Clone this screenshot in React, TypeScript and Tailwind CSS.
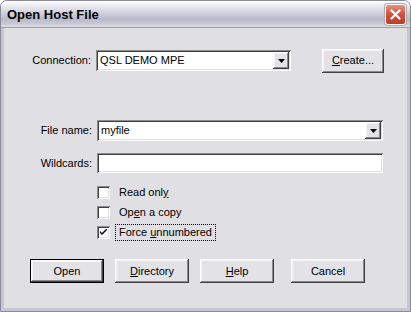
import React from "react";

const raised =
  "bg-[#e3e2e6] shadow-[inset_-1px_-1px_0_#404040,inset_1px_1px_0_#ffffff,inset_-2px_-2px_0_#8a8a8a,inset_2px_2px_0_#f4f4f4]";
const sunken =
  "bg-white shadow-[inset_1px_1px_0_#8c8c8c,inset_-1px_-1px_0_#ffffff,inset_2px_2px_0_#404040,inset_-2px_-2px_0_#e0dfe3]";

function Arrow() {
  return (
    <div className={`${raised} w-[16px] h-[17px] flex items-center justify-center`}>
      <svg width="7" height="4" viewBox="0 0 7 4">
        <path d="M0 0H7L3.5 4Z" fill="#000" />
      </svg>
    </div>
  );
}

function Button({ children, def, w = "w-[74px]" }: { children: React.ReactNode; def?: boolean; w?: string }) {
  return (
    <div className={`${w} h-[24px] ${def ? "border border-black" : ""} flex`}>
      <div className={`${raised} flex-1 flex items-center justify-center text-[11px] text-black`}>{children}</div>
    </div>
  );
}

function Check({ checked, children, focus }: { checked?: boolean; children: React.ReactNode; focus?: boolean }) {
  return (
    <div className="h-[20px] flex items-center">
      <div className={`${sunken} w-[13px] h-[13px] flex items-center justify-center`}>
        {checked && (
          <svg width="7" height="7" viewBox="0 0 7 7">
            <path d="M0 2L0 4L2 6L7 1L7 -1L2 4Z" fill="#000" />
          </svg>
        )}
      </div>
      <div
        className={`ml-[5px] px-[3px] h-[17px] flex items-center text-[11px] text-black ${
          focus ? "border border-dotted border-black" : "border border-transparent"
        }`}
      >
        {children}
      </div>
    </div>
  );
}

export default function App() {
  return (
    <div className="w-[411px] h-[312px] bg-white" style={{ fontFamily: '"Liberation Sans", Arial, sans-serif' }}>
      <div className="w-[411px] h-[312px] flex flex-col rounded-t-[7px] overflow-hidden border border-[#8a8a9c] bg-[#e0dfe3]">
        {/* title bar */}
        <div className="h-[27px] flex items-center pl-[6px] pr-[4px] bg-[linear-gradient(to_bottom,#ffffff_0%,#eeeef3_15%,#d2d2de_45%,#b9b9c9_70%,#c9c9d6_88%,#e2e2ea_100%)] border-b border-[#9b9bab]">
          <div className="text-[13px] font-bold text-black flex-1 mt-[1px]">Open Host File</div>
          <div className="w-[21px] h-[21px] rounded-[3px] border border-white bg-[linear-gradient(to_bottom,#e8907f,#d2503f_50%,#c03a2a)] flex items-center justify-center shadow-[0_0_0_1px_#b5a8a8]">
            <svg width="11" height="11" viewBox="0 0 11 11">
              <path d="M1.5 1.5L9.5 9.5M9.5 1.5L1.5 9.5" stroke="#fff" strokeWidth="2.2" strokeLinecap="round" />
            </svg>
          </div>
        </div>
        {/* body */}
        <div className="flex-1 flex flex-col border-l-[3px] border-r-[3px] border-b-[3px] border-[#c6c6d2] text-[11px] text-black">
          {/* connection row */}
          <div className="mt-[21px] h-[23px] flex items-center">
            <div className="ml-[26px] w-[61px] text-right">Connection:</div>
            <div className={`${sunken} ml-[5px] w-[195px] h-[21px] flex items-center pl-[4px] pr-[2px]`}>
              <div className="flex-1 text-[11px]">QSL DEMO MPE</div>
              <Arrow />
            </div>
            <div className="ml-[31px]">
              <Button w="w-[62px]">
                <span>
                  <u>C</u>reate...
                </span>
              </Button>
            </div>
          </div>
          {/* file name row */}
          <div className="mt-[48px] h-[21px] flex items-center">
            <div className="ml-[26px] w-[62px] text-right">File name:</div>
            <div className={`${sunken} ml-[5px] w-[286px] h-[21px] flex items-center pl-[4px] pr-[2px]`}>
              <div className="flex-1">myfile</div>
              <Arrow />
            </div>
          </div>
          {/* wildcards row */}
          <div className="mt-[12px] h-[20px] flex items-center">
            <div className="ml-[26px] w-[62px] text-right">Wildcards:</div>
            <div className={`${sunken} ml-[5px] w-[286px] h-[20px]`} />
          </div>
          {/* checkboxes */}
          <div className="mt-[9px] ml-[93px] flex flex-col">
            <Check>
              <span>
                Read onl<u>y</u>
              </span>
            </Check>
            <Check>
              <span>
                Op<u>e</u>n a copy
              </span>
            </Check>
            <Check checked focus>
              <span>
                Force <u>u</u>nnumbered
              </span>
            </Check>
          </div>
          {/* buttons */}
          <div className="mt-[17px] ml-[26px] flex">
            <Button def>Open</Button>
            <div className="ml-[11px]">
              <Button>
                <span>
                  <u>D</u>irectory
                </span>
              </Button>
            </div>
            <div className="ml-[11px]">
              <Button>
                <span>
                  <u>H</u>elp
                </span>
              </Button>
            </div>
            <div className="ml-[17px]">
              <Button>Cancel</Button>
            </div>
          </div>
        </div>
      </div>
    </div>
  );
}
